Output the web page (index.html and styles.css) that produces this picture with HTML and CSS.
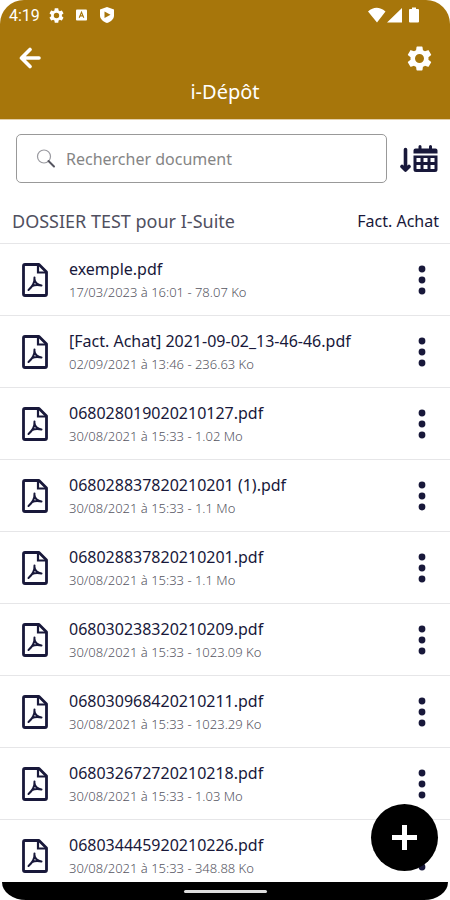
FILE: index.html
```
<!DOCTYPE html>
<html lang="fr">
<head>
    <meta charset="UTF-8">
    <meta name="viewport" content="width=device-width, initial-scale=1.0">
    <title>i-Dépôt</title>
    <link rel="stylesheet" href="styles.css">
</head>
<body>
    <svg class="sprite" aria-hidden="true">
        <symbol id="icon-gear" viewBox="2 2 20 20">
            <path fill="currentColor" d="M19.14 12.94c.04-.3.06-.61.06-.94 0-.32-.02-.64-.07-.94l2.03-1.58a.49.49 0 0 0 .12-.61l-1.92-3.32a.488.488 0 0 0-.59-.22l-2.39.96c-.5-.38-1.03-.7-1.62-.94l-.36-2.54a.484.484 0 0 0-.48-.41h-3.84c-.24 0-.43.17-.47.41l-.36 2.54c-.59.24-1.13.57-1.62.94l-2.39-.96c-.22-.08-.47 0-.59.22L2.74 8.87c-.12.21-.08.47.12.61l2.03 1.58c-.05.3-.09.63-.09.94s.02.64.07.94l-2.03 1.58a.49.49 0 0 0-.12.61l1.92 3.32c.12.22.37.29.59.22l2.39-.96c.5.38 1.03.7 1.62.94l.36 2.54c.05.24.24.41.48.41h3.84c.24 0 .44-.17.47-.41l.36-2.54c.59-.24 1.13-.56 1.62-.94l2.39.96c.22.08.47 0 .59-.22l1.92-3.32c.12-.22.07-.47-.12-.61l-2.01-1.58zM12 15.6A3.6 3.6 0 1 1 12 8.4a3.6 3.6 0 0 1 0 7.2z"/>
        </symbol>
        <symbol id="icon-pdf" viewBox="0 0 26 34">
            <path fill="none" stroke="currentColor" stroke-width="2.800" stroke-linejoin="round" d="M3 1.500H17L24.500 9V31q0 1.500-1.500 1.500H3q-1.500 0-1.500-1.500V3q0-1.500 1.500-1.500z"/>
            <path fill="none" stroke="currentColor" stroke-width="2.200" d="M16 2v7.500h8"/>
            <path fill="none" stroke="currentColor" stroke-width="2" stroke-linecap="round" stroke-linejoin="round" d="M12.500 14.500C12.800 18.500 10.500 23.500 6.500 27M12.500 16C12.500 19 15.500 22 19.500 22.500M10 23.200C12.500 21.800 15.500 21.500 19.500 22.500"/>
        </symbol>
        <symbol id="icon-dots" viewBox="0 0 8 32">
            <circle cx="4" cy="5" r="3.400" fill="currentColor"/>
            <circle cx="4" cy="16" r="3.400" fill="currentColor"/>
            <circle cx="4" cy="27" r="3.400" fill="currentColor"/>
        </symbol>
    </svg>

    <div class="app">
        <header class="header">
            <div class="status-bar">
                <span class="time">4:19</span>
                <svg class="status-gear"><use href="#icon-gear"/></svg>
                <svg class="status-app" viewBox="0 0 12 12">
                    <rect x="0" y="0" width="12" height="12" rx="1" fill="#fff"/>
                    <path d="M3.500 9 6 3l2.500 6M4.500 7h3" fill="none" stroke="#a7760b" stroke-width="1.200"/>
                </svg>
                <svg class="status-shield" viewBox="0 0 14 16">
                    <path fill="#fff" d="M7 0l7 2.500v6c0 3.500-3 6.200-7 7.500-4-1.300-7-4-7-7.500v-6z"/>
                    <path fill="#a7760b" d="M4.500 4.500l6 3.200-6 3.300z"/>
                </svg>
                <svg class="status-signal" viewBox="0 0 51 16">
                    <path fill="#fff" d="M0 4.500Q8.500-3 17.500 4.500L9 15.500zM34 1v14.500H19zM41 3q0-1 1-1h2V.5h4V2h2q1 0 1 1v11.500q0 1-1 1h-8q-1 0-1-1z"/>
                </svg>
            </div>
            <div class="header-actions">
                <button type="button" class="icon-button" aria-label="Retour">
                    <svg class="icon-back" viewBox="0 0 22 22">
                        <path d="M20 11H3M11 2.500 2.500 11l8.500 8.500" fill="none" stroke="currentColor" stroke-width="3.600" stroke-linecap="round" stroke-linejoin="round"/>
                    </svg>
                </button>
                <button type="button" class="icon-button" aria-label="Paramètres">
                    <svg class="icon-settings"><use href="#icon-gear"/></svg>
                </button>
            </div>
            <h1>i-Dépôt</h1>
        </header>

        <div class="toolbar">
            <label class="search">
                <svg class="icon-search" viewBox="0 0 20 20">
                    <circle cx="8" cy="7.500" r="6.500" fill="none" stroke="#9a9aa0" stroke-width="1.200"/>
                    <path d="M12.500 12 18 17.500" stroke="#555560" stroke-width="2" stroke-linecap="round"/>
                </svg>
                <input type="text" placeholder="Rechercher document" aria-label="Rechercher document">
            </label>
            <button type="button" class="icon-button sort" aria-label="Trier par date">
                <svg class="icon-sort" viewBox="0 0 38 28">
                    <path d="M5.500 4.500v19M2 21.500l3.500 3.500 3.500-3.500" fill="none" stroke="currentColor" stroke-width="3.600" stroke-linecap="round" stroke-linejoin="round"/>
                    <path fill="currentColor" fill-rule="evenodd" d="M18.500 1.500a1.500 1.500 0 0 1 3 0V3.500h7.500V1.500a1.500 1.500 0 0 1 3 0V3.500h3.500q2 0 2 2V8.500h-24v-3q0-2 2-2H18.500zM13.500 10.500h24v14q0 2.500-2.500 2.500H16q-2.500 0-2.500-2.500zM16.500 13v4h4v-4zM23.500 13v4h4v-4zM30.500 13v4h4v-4zM16.500 20v4h4v-4zM23.500 20v4h4v-4zM30.500 20v4h4v-4z"/>
                </svg>
            </button>
        </div>

        <div class="folder">
            <h2>DOSSIER TEST pour I-Suite</h2>
            <span class="folder-type">Fact. Achat</span>
        </div>

        <ul class="files">
            <li class="file">
                <svg class="icon-pdf"><use href="#icon-pdf"/></svg>
                <div class="file-text">
                    <p class="file-name">exemple.pdf</p>
                    <p class="file-info">17/03/2023 à 16:01 - 78.07 Ko</p>
                </div>
                <button type="button" class="icon-button" aria-label="Options"><svg class="icon-dots"><use href="#icon-dots"/></svg></button>
            </li>
            <li class="file">
                <svg class="icon-pdf"><use href="#icon-pdf"/></svg>
                <div class="file-text">
                    <p class="file-name">[Fact. Achat] 2021-09-02_13-46-46.pdf</p>
                    <p class="file-info">02/09/2021 à 13:46 - 236.63 Ko</p>
                </div>
                <button type="button" class="icon-button" aria-label="Options"><svg class="icon-dots"><use href="#icon-dots"/></svg></button>
            </li>
            <li class="file">
                <svg class="icon-pdf"><use href="#icon-pdf"/></svg>
                <div class="file-text">
                    <p class="file-name">068028019020210127.pdf</p>
                    <p class="file-info">30/08/2021 à 15:33 - 1.02 Mo</p>
                </div>
                <button type="button" class="icon-button" aria-label="Options"><svg class="icon-dots"><use href="#icon-dots"/></svg></button>
            </li>
            <li class="file">
                <svg class="icon-pdf"><use href="#icon-pdf"/></svg>
                <div class="file-text">
                    <p class="file-name">068028837820210201 (1).pdf</p>
                    <p class="file-info">30/08/2021 à 15:33 - 1.1 Mo</p>
                </div>
                <button type="button" class="icon-button" aria-label="Options"><svg class="icon-dots"><use href="#icon-dots"/></svg></button>
            </li>
            <li class="file">
                <svg class="icon-pdf"><use href="#icon-pdf"/></svg>
                <div class="file-text">
                    <p class="file-name">068028837820210201.pdf</p>
                    <p class="file-info">30/08/2021 à 15:33 - 1.1 Mo</p>
                </div>
                <button type="button" class="icon-button" aria-label="Options"><svg class="icon-dots"><use href="#icon-dots"/></svg></button>
            </li>
            <li class="file">
                <svg class="icon-pdf"><use href="#icon-pdf"/></svg>
                <div class="file-text">
                    <p class="file-name">068030238320210209.pdf</p>
                    <p class="file-info">30/08/2021 à 15:33 - 1023.09 Ko</p>
                </div>
                <button type="button" class="icon-button" aria-label="Options"><svg class="icon-dots"><use href="#icon-dots"/></svg></button>
            </li>
            <li class="file">
                <svg class="icon-pdf"><use href="#icon-pdf"/></svg>
                <div class="file-text">
                    <p class="file-name">068030968420210211.pdf</p>
                    <p class="file-info">30/08/2021 à 15:33 - 1023.29 Ko</p>
                </div>
                <button type="button" class="icon-button" aria-label="Options"><svg class="icon-dots"><use href="#icon-dots"/></svg></button>
            </li>
            <li class="file">
                <svg class="icon-pdf"><use href="#icon-pdf"/></svg>
                <div class="file-text">
                    <p class="file-name">068032672720210218.pdf</p>
                    <p class="file-info">30/08/2021 à 15:33 - 1.03 Mo</p>
                </div>
                <button type="button" class="icon-button" aria-label="Options"><svg class="icon-dots"><use href="#icon-dots"/></svg></button>
            </li>
            <li class="file">
                <svg class="icon-pdf"><use href="#icon-pdf"/></svg>
                <div class="file-text">
                    <p class="file-name">068034445920210226.pdf</p>
                    <p class="file-info">30/08/2021 à 15:33 - 348.88 Ko</p>
                </div>
                <button type="button" class="icon-button" aria-label="Options"><svg class="icon-dots"><use href="#icon-dots"/></svg></button>
            </li>
        </ul>

        <button type="button" class="add-button" aria-label="Ajouter">
            <svg class="icon-plus" viewBox="0 0 25 25">
                <path d="M12.500 0v25M0 12.500h25" stroke="currentColor" stroke-width="5"/>
            </svg>
        </button>

        <div class="nav-bar"><span class="nav-handle"></span></div>
    </div>
</body>
</html>
```
FILE: styles.css
```
* {
    box-sizing: border-box;
}

body {
    margin: 0;
    background-color: #fff;
    font-family: 'Noto Sans', 'Open Sans', sans-serif;
    color: #18183a;
}

h1, h2, p, ul {
    margin: 0;
    padding: 0;
}

svg {
    display: block;
    flex-shrink: 0;
}

.sprite {
    position: absolute;
    width: 0;
    height: 0;
}

.app {
    position: relative;
    display: flex;
    flex-direction: column;
    height: 100vh;
    overflow: hidden;
}

.icon-button {
    display: flex;
    padding: 0;
    border: none;
    background: none;
    color: inherit;
    cursor: pointer;
}

/* header */
.header {
    flex-shrink: 0;
    padding-bottom: 14px;
    border-radius: 24px 24px 0 0;
    border-bottom: 1px solid #e3cfaa;
    background-color: #a7760b;
    color: #fff;
}

.status-bar {
    display: flex;
    align-items: center;
    height: 30px;
    padding: 0 31px 0 9px;
    font-family: Roboto, sans-serif;
    font-size: 16px;
}

.status-gear {
    width: 15px;
    height: 15px;
    margin-left: 9px;
}

.status-app {
    width: 11px;
    height: 12px;
    margin-left: 12px;
}

.status-shield {
    width: 14px;
    height: 16px;
    margin-left: 13px;
}

.status-signal {
    width: 51px;
    height: 16px;
    margin-left: auto;
}

.header-actions {
    display: flex;
    align-items: center;
    justify-content: space-between;
    height: 48px;
    padding: 8px 18px 0 19px;
}

.icon-back {
    width: 22px;
    height: 22px;
}

.icon-settings {
    width: 25px;
    height: 25px;
}

.header h1 {
    font-size: 20px;
    font-weight: 400;
    line-height: 27px;
    text-align: center;
}

/* search */
.toolbar {
    display: flex;
    flex-shrink: 0;
    align-items: center;
    gap: 13px;
    padding: 14px 12px 0 16px;
}

.search {
    display: flex;
    flex: 1;
    align-items: center;
    gap: 10px;
    height: 49px;
    padding: 0 19px;
    border: 1px solid #999;
    border-radius: 5px;
}

.icon-search {
    width: 20px;
    height: 20px;
}

.search input {
    flex: 1;
    min-width: 0;
    padding: 0;
    border: none;
    outline: none;
    background: none;
    font-family: inherit;
    font-size: 16px;
    color: inherit;
}

.search input::placeholder {
    color: #858585;
    opacity: 1;
}

.icon-sort {
    width: 38px;
    height: 28px;
}

/* folder */
.folder {
    display: flex;
    flex-shrink: 0;
    align-items: center;
    justify-content: space-between;
    height: 60px;
    padding: 15px 11px 0 12px;
}

.folder h2 {
    font-size: 18px;
    font-weight: 400;
    color: #50505f;
}

.folder-type {
    font-size: 16px;
}

/* files */
.files {
    flex: 1;
    min-height: 0;
    overflow: hidden;
    list-style: none;
}

.file {
    display: flex;
    align-items: center;
    height: 72px;
    padding: 0 24px 0 22px;
    border-top: 1px solid #e6e6e8;
}

.icon-pdf {
    width: 26px;
    height: 34px;
}

.file-text {
    flex: 1;
    min-width: 0;
    margin-left: 21px;
}

.file-name {
    font-size: 16px;
    line-height: 24px;
}

.file-info {
    font-size: 13px;
    font-weight: 300;
    line-height: 22px;
    color: #55555f;
}

.icon-dots {
    width: 8px;
    height: 32px;
}

.add-button {
    position: absolute;
    right: 12px;
    bottom: 29px;
    display: flex;
    align-items: center;
    justify-content: center;
    width: 67px;
    height: 67px;
    padding: 0;
    border: none;
    border-radius: 50%;
    background-color: #000;
    color: #fff;
    cursor: pointer;
}

.icon-plus {
    width: 25px;
    height: 25px;
}

/* system bar */
.nav-bar {
    display: flex;
    flex-shrink: 0;
    justify-content: center;
    height: 18px;
    padding-top: 8px;
    margin: 0 2px;
    border-radius: 0 0 24px 24px / 0 0 18px 18px;
    background-color: #000;
}

.nav-handle {
    width: 83px;
    height: 3px;
    border-radius: 2px;
    background-color: #ddd;
}
```
